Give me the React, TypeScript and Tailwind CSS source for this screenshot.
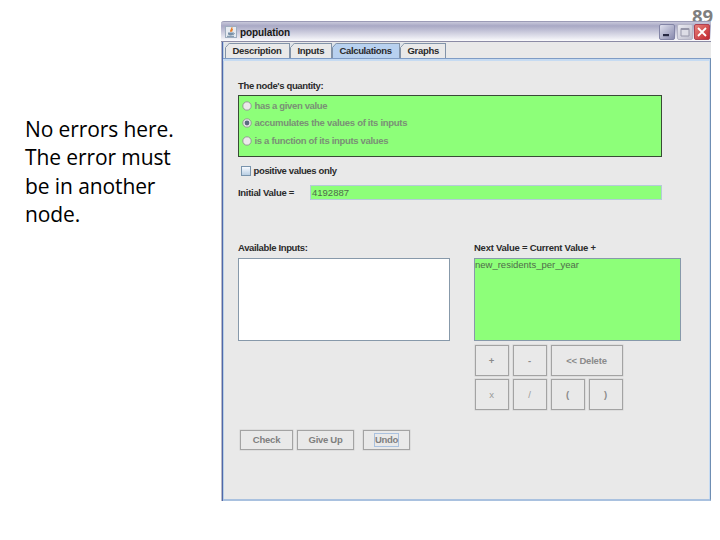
import React from "react";

const ui = "font-['Liberation_Sans',sans-serif] text-[9.5px] leading-[12px] whitespace-pre";

function JavaIcon() {
  return (
    <svg width="12" height="12" viewBox="0 0 12 12" className="block">
      <rect x="0.5" y="0.5" width="11" height="11" fill="#e6ebf1" stroke="#9fadbf" />
      <path d="M6.8 1.3C7.8 3 4.7 3.7 5.8 5.8M7.8 3.3C6.4 4 6.6 4.7 6.9 5.6" fill="none" stroke="#e77a25" strokeWidth="1.2" />
      <path d="M3 6.5h5v1.6c0 1-1 1.4-2.4 1.4S3 9 3 8.1z" fill="#7890a8" />
      <path d="M8 7c2-.3 1.5 1.5-.2 1.5M2 10.3h7" fill="none" stroke="#53718e" strokeWidth="0.8" />
    </svg>
  );
}

function Tab({ label, width, active = false, spacing }: { label: string; width: string; active?: boolean; spacing: string }) {
  return (
    <div className={`relative h-[15px] ${width}`}>
      <svg className="absolute inset-0 h-full w-full" preserveAspectRatio="none">
        <rect x="0" y="0" width="100%" height="15" fill={active ? "#b8d1ef" : "#e9e9e9"} />
        <path d="M0 0H4.5L0.5 4.5V15" fill="none" stroke="#8293a8" />
        <path d="M0 0H4L0 4Z" fill="#dfe3e8" />
        <line x1="4.5" y1="0.5" x2="100%" y2="0.5" stroke="#8293a8" />
      </svg>
      <div className={`relative h-full border-r border-[#8293a8] pl-[7.5px] pt-[1.5px] font-bold text-[#2b2b2b] ${ui} ${spacing}`}>{label}</div>
    </div>
  );
}

function Radio({ label, checked = false, spacing }: { label: string; checked?: boolean; spacing: string }) {
  return (
    <div className="flex h-[17.5px] items-center">
      <svg width="10" height="10" viewBox="0 0 10 10" className="mr-[2.5px] block">
        <circle cx="5" cy="5" r="4.2" fill="#ebe9eb" stroke="#8d938d" strokeWidth="0.9" />
        {checked && <circle cx="5" cy="5" r="2.4" fill="#5b6b80" />}
      </svg>
      <span className={`font-bold text-[#7a9076] ${ui} ${spacing}`}>{label}</span>
    </div>
  );
}

function Key({ label, width = "w-[34px]", light = false }: { label: string; width?: string; light?: boolean }) {
  return (
    <button className={`flex h-[31px] items-center justify-center border border-[#a3a3a3] pr-px shadow-[0_0_0_0.5px_#d0d0d0] ${light ? "font-normal text-[#999999]" : "font-bold text-[#8b8b8b]"} ${width} ${ui} tracking-[-0.2px]`}>
      {label}
    </button>
  );
}

function ActionButton({ children, size }: { children: React.ReactNode; size: string }) {
  return (
    <button className={`flex h-[20px] items-center justify-center border border-[#a3a3a3] font-bold text-[#7f7f7f] shadow-[0_0_0_0.5px_#d0d0d0] ${size} ${ui}`}>
      {children}
    </button>
  );
}

function TitleButtons() {
  return (
    <div className="flex gap-[1.5px]">
      <svg width="16" height="16" viewBox="0 0 16 16">
        <defs>
          <linearGradient id="min" x2="1" y2="1"><stop stopColor="#e2e3f0" /><stop offset="1" stopColor="#8486ab" /></linearGradient>
          <linearGradient id="max" x2="1" y2="1"><stop stopColor="#ececf3" /><stop offset="1" stopColor="#bcbccb" /></linearGradient>
          <linearGradient id="close" x2="1" y2="1"><stop stopColor="#e8857c" /><stop offset="1" stopColor="#c0222c" /></linearGradient>
        </defs>
        <rect x=".5" y=".5" width="15" height="15" rx="1.5" fill="url(#min)" stroke="#8385a6" />
        <rect x="4" y="10" width="6" height="2.2" fill="#272943" />
      </svg>
      <svg width="16" height="16" viewBox="0 0 16 16">
        <rect x=".5" y=".5" width="15" height="15" rx="1.5" fill="url(#max)" stroke="#b5b5c6" />
        <path d="M4 4.5h8v7.5H4zM4 5.5h8" fill="#dddde6" stroke="#9696a9" />
      </svg>
      <svg width="16" height="16" viewBox="0 0 16 16">
        <rect x=".5" y=".5" width="15" height="15" rx="1.5" fill="url(#close)" stroke="#b04050" />
        <path d="M4 4l8 8M12 4l-8 8" stroke="white" strokeWidth="1.8" />
      </svg>
    </div>
  );
}

export default function App() {
  return (
    <div className="relative flex h-[540px] w-[720px] overflow-hidden bg-white">
      <div className="absolute left-[692px] top-[5px] font-['Open_Sans',sans-serif] text-[18.5px] font-bold leading-[22px] text-[#7f7f7f]">89</div>
      <aside className="w-[221px] shrink-0 pl-[25px] pt-[114.5px] font-['Open_Sans',sans-serif] text-[21px] leading-[28.6px] tracking-[-0.1px] text-black">
        <div className="whitespace-nowrap">No errors here.</div>
        <div className="whitespace-nowrap">The error must</div>
        <div className="whitespace-nowrap">be in another</div>
        <div className="whitespace-nowrap">node.</div>
      </aside>

      <section className="relative mt-[21px] flex h-[480px] w-[490px] flex-col rounded-t-[3px] bg-[#e9e9e9]">
        <header className="flex h-[21px] shrink-0 items-center justify-between rounded-t-[3px] border-b border-t border-b-[#8b8ba5] border-t-[#9b9bb6] bg-linear-to-b from-[#c9c9db] via-[#a9a9c5] via-20% to-[#fbfbfd] pl-[4px] pr-px pt-px">
          <div className="flex items-center gap-[3px]">
            <JavaIcon />
            <span className="pt-px font-['Liberation_Sans',sans-serif] text-[10px] font-bold leading-[12px] tracking-[-0.1px] text-[#171717]">population</span>
          </div>
          <TitleButtons />
        </header>
        <div className="flex min-h-0 flex-1 flex-col border-l border-l-[#b9b9c6]">
          <div className="flex min-h-0 flex-1 flex-col border-l border-l-[#5068aa] shadow-[inset_1px_0_0_#b8cfe5]">
            <nav className="flex h-[16px] shrink-0 items-end pl-[2px]">
              <Tab label="Description" width="w-[65px]" spacing="tracking-[-0.3px]" />
              <Tab label="Inputs" width="w-[42px]" spacing="tracking-[-0.3px]" />
              <Tab label="Calculations" width="w-[68px]" active spacing="tracking-[-0.36px]" />
              <Tab label="Graphs" width="w-[46px]" spacing="tracking-[-0.3px]" />
            </nav>
            <main className="flex flex-1 flex-col border-b-2 border-r border-t border-b-[#a9c1df] border-r-[#6f8eb3] border-t-[#7f9cc5] pl-[15px] shadow-[inset_-1px_2px_0_#c6dbf2]">
              <h2 className={`mt-[20px] pt-px font-bold text-[#2b2b2b] tracking-[-0.36px] ${ui}`}>The node's quantity:</h2>
              <div className="mt-[3px] h-[62px] w-[424px] border border-[#394b36] bg-[#8dff79] pl-[3px] pt-px">
                <Radio label="has a given value" spacing="tracking-[-0.35px]" />
                <Radio label="accumulates the values of its inputs" checked spacing="tracking-[-0.29px]" />
                <Radio label="is a function of its inputs values" spacing="tracking-[-0.32px]" />
              </div>
              <div className="mt-[8px] flex h-[12px] items-center pl-[3px]">
                <span className="h-[10px] w-[10px] border border-[#7994ad] bg-linear-to-b from-[#f8fbff] to-[#b9cfe4]" />
                <span className={`ml-[2.5px] font-bold text-[#2b2b2b] tracking-[-0.36px] ${ui}`}>positive values only</span>
              </div>
              <div className="mt-[8px] flex h-[15px] items-center">
                <span className={`w-[72px] font-bold text-[#2b2b2b] tracking-[-0.3px] ${ui}`}>Initial Value =</span>
                <div className={`flex h-[15px] w-[352px] items-center border border-[#b4cbd8] bg-[#8dff79] pl-px text-[#4f6b4a] ${ui}`}>4192887</div>
              </div>
              <div className="mt-[42px] flex gap-[24px]">
                <div className="w-[212px]">
                  <h2 className={`font-bold text-[#2b2b2b] tracking-[-0.36px] ${ui}`}>Available Inputs:</h2>
                  <div className="mt-[4px] h-[83px] border border-[#8799aa] bg-white" />
                </div>
                <div className="w-[207px]">
                  <h2 className={`font-bold text-[#2b2b2b] tracking-[-0.25px] ${ui}`}>Next Value = Current Value +</h2>
                  <div className={`mt-[4px] h-[83px] border border-[#8799aa] bg-[#8dff79] text-[#4f6b4a] ${ui}`}>new_residents_per_year</div>
                  <div className="mt-[4px] flex gap-[4px] pl-px">
                    <Key label="+" />
                    <Key label="-" />
                    <Key label="<< Delete" width="w-[72px]" />
                  </div>
                  <div className="mt-[3px] flex gap-[4px] pl-px">
                    <Key label="x" light />
                    <Key label="/" light />
                    <Key label="(" />
                    <Key label=")" />
                  </div>
                </div>
              </div>
              <div className="mt-[20px] flex pl-[2px]">
                <ActionButton size="w-[53px] tracking-[-0.2px]">Check</ActionButton>
                <ActionButton size="ml-[4px] w-[57px] tracking-[-0.3px]">Give Up</ActionButton>
                <ActionButton size="ml-[9px] w-[47px] tracking-[-0.3px]">
                  <span className="border border-[#a9c1df]">Undo</span>
                </ActionButton>
              </div>
            </main>
          </div>
        </div>
      </section>
    </div>
  );
}
